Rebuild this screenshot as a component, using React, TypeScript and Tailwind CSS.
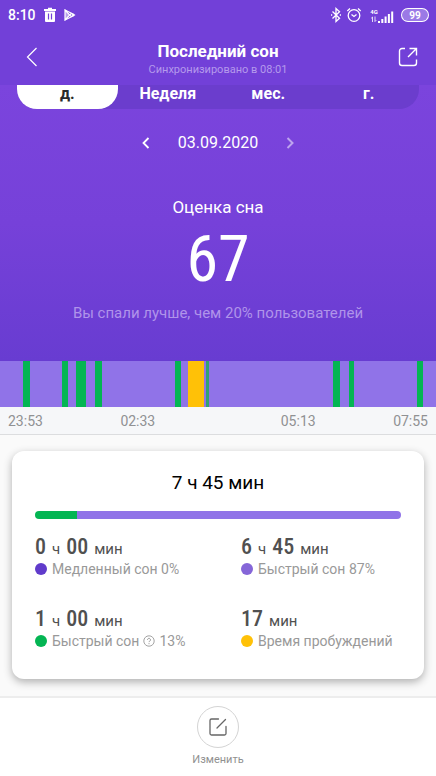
import type { ReactNode } from 'react';

type Stage = 'light' | 'rem' | 'brief' | 'awake';

const stageColors: Record<Stage, string> = {
  light: 'bg-[#9073e8]',
  rem: 'bg-[#04b553]',
  brief: 'bg-[#33a273]',
  awake: 'bg-[#ffc107]'
};

// Sleep stages in order, with their relative length
const timeline: { stage: Stage; length: number }[] = [
  { stage: 'light', length: 23 },
  { stage: 'rem', length: 7 },
  { stage: 'light', length: 32 },
  { stage: 'rem', length: 6 },
  { stage: 'light', length: 8 },
  { stage: 'rem', length: 10 },
  { stage: 'light', length: 9 },
  { stage: 'rem', length: 7 },
  { stage: 'light', length: 73 },
  { stage: 'rem', length: 6 },
  { stage: 'light', length: 7 },
  { stage: 'awake', length: 16 },
  { stage: 'light', length: 2 },
  { stage: 'brief', length: 3 },
  { stage: 'light', length: 124 },
  { stage: 'rem', length: 7 },
  { stage: 'light', length: 9 },
  { stage: 'rem', length: 5 },
  { stage: 'light', length: 63 },
  { stage: 'rem', length: 6 },
  { stage: 'light', length: 13 }
];

const tabs = ['д.', 'Неделя', 'мес.', 'г.'];

function StatusBar() {
  return (
    <div className="flex h-8 items-center justify-between px-2 pb-0.5 text-white">
      <div className="flex items-center gap-2">
        <span className="text-sm font-medium">8:10</span>
        <svg className="h-4 w-3" viewBox="0 0 12 16" fill="none">
          <path d="M0 3h12M4 1.7h4" stroke="currentColor" strokeWidth="2" />
          <path d="M1 4.5h10V14a1 1 0 0 1-1 1H2a1 1 0 0 1-1-1z" fill="currentColor" />
          <path d="M4.5 6.5v6M7.5 6.5v6" stroke="#7240d8" strokeWidth="1.2" />
        </svg>
        <svg className="h-3 w-3" viewBox="0 0 12 12" fill="none" stroke="currentColor" strokeWidth="1.2">
          <path d="M1 1v10l4.800-5z" fill="currentColor" fillOpacity=".5" />
          <path d="M1 1l8 4M1 11l8-4M5.800 6l2.200-2M5.800 6 8 8" />
          <path d="M9 4.300 11.500 6 9 7.700 7.500 6z" fill="currentColor" stroke="none" />
        </svg>
      </div>
      <div className="flex items-center gap-1">
        <svg className="h-4 w-3" viewBox="0 0 12 16" fill="none" stroke="currentColor" strokeWidth="1.3">
          <path d="m2.500 4.500 7 6.800L6 14.500v-13l3.500 3.200-7 6.800" />
          <path d="M1 8h1.200M9.800 8H11" />
        </svg>
        <svg className="h-4 w-4" viewBox="0 0 16 16" fill="none" stroke="currentColor" strokeWidth="1.3">
          <circle cx="8" cy="8.500" r="5.800" />
          <path d="M1.300 4 4 1.600M14.700 4 12 1.600M5.500 7.500 8 9.500l2.500-2" />
        </svg>
        <div className="ml-1 flex items-end">
          <div className="flex flex-col items-center">
            <span className="text-[6px] leading-[7px] font-bold">4G</span>
            <svg className="h-2 w-2" viewBox="0 0 8 8" fill="none" stroke="currentColor" strokeWidth=".8">
              <path d="M2.500 7V2L1.200 3.300M5 1.500v5l1.300-1.300" />
            </svg>
          </div>
          <svg className="h-3 w-4" viewBox="0 0 16 12" fill="currentColor">
            <path d="M0 10h2v2H0zM3.300 8h2v4h-2zM6.600 5.500h2V12h-2zM9.900 3h2v9h-2zM13.200.5h2V12h-2z" />
          </svg>
        </div>
        <span className="ml-1 flex h-3 w-[26px] items-center justify-center rounded-full bg-[#9b79e6] text-[10px] font-bold ring-1 ring-white">
          99
        </span>
      </div>
    </div>
  );
}

function Header() {
  return (
    <header className="bg-[#7240d8] text-white">
      <StatusBar />
      <div className="flex h-[53px] items-center justify-between px-[18px] pb-1">
        <button type="button" aria-label="Назад" className="flex w-7 justify-center">
          <svg className="h-5 w-3" viewBox="0 0 12 20" fill="none" stroke="currentColor" strokeWidth="1.2">
            <path d="M10.500 1 1.500 10l9 9" />
          </svg>
        </button>
        <div className="pt-1.5 text-center">
          <h1 className="text-[17px] leading-5 font-bold">Последний сон</h1>
          <p className="text-[11px] leading-[18px] text-[#b59aec]">Синхронизировано в 08:01</p>
        </div>
        <button type="button" aria-label="Поделиться" className="flex w-7 justify-end">
          <svg className="h-5 w-5" viewBox="0 0 20 20" fill="none" stroke="currentColor" strokeWidth="1.400">
            <path d="M7 1.500H4A2.500 2.500 0 0 0 1.500 4v12A2.500 2.500 0 0 0 4 18.500h12a2.500 2.500 0 0 0 2.500-2.500V12.500" />
            <path d="M11.500 1.500h7v7M18.500 1.500l-8.500 8.500" />
          </svg>
        </button>
      </div>
    </header>
  );
}

function PeriodTabs() {
  return (
    <div className="mx-[17px] grid h-6 grid-cols-4 rounded-b-[20px] bg-[#6b3dcd]" role="tablist">
      {tabs.map((tab, i) => (
        <button
          key={tab}
          type="button"
          role="tab"
          aria-selected={i === 0}
          className={
            i === 0
              ? 'rounded-b-[20px] bg-white pb-1.5 text-base leading-4 font-bold text-[#2a2a2a]'
              : 'pb-1.5 text-base leading-4 font-bold text-white'
          }
        >
          {tab}
        </button>
      ))}
    </div>
  );
}

function Score() {
  return (
    <section className="bg-linear-to-b from-[#7b44dd] via-[#7641d9] to-[#683cd1] pb-[38px] text-center text-white">
      <PeriodTabs />
      <div className="flex items-center justify-center gap-6 pt-[22px]">
        <button type="button" aria-label="Предыдущий день" className="flex w-4 justify-center">
          <svg className="h-3 w-2" viewBox="0 0 8 12" fill="none" stroke="currentColor" strokeWidth="1.800">
            <path d="M6.500 1 1.500 6l5 5" />
          </svg>
        </button>
        <span className="text-base leading-6">03.09.2020</span>
        <button type="button" aria-label="Следующий день" className="flex w-4 justify-center text-[#bda4ee]">
          <svg className="h-3 w-2" viewBox="0 0 8 12" fill="none" stroke="currentColor" strokeWidth="2">
            <path d="m1.500 1 5 5-5 5" />
          </svg>
        </button>
      </div>
      <h2 className="mt-10 text-[17px] leading-6">Оценка сна</h2>
      <p className="mt-2 font-['Roboto_Condensed','Liberation_Sans_Narrow',Roboto,sans-serif] text-[64px] leading-[66px] font-normal">
        67
      </p>
      <p className="mt-2.5 text-[15px] leading-5 text-[#b094ea]">Вы спали лучше, чем 20% пользователей</p>
    </section>
  );
}

function Timeline() {
  return (
    <section>
      <div className="flex h-[46px]">
        {timeline.map((part, i) => (
          <div key={i} className={stageColors[part.stage]} style={{ flex: `${part.length} 0 0` }} />
        ))}
      </div>
      <div className="flex h-7 items-center justify-between border-b border-[#dcdddf] bg-[#f6f7f9] px-2 text-sm text-[#909193]">
        <span>23:53</span>
        <span>02:33</span>
        <span className="ml-12">05:13</span>
        <span>07:55</span>
      </div>
    </section>
  );
}

interface StatProps {
  hours?: string;
  minutes: string;
  dot: string;
  children: ReactNode;
}

function StatNumber({ children }: { children: ReactNode }) {
  return (
    <span className="font-['Roboto_Condensed',Roboto,sans-serif] text-[22px] leading-6 font-medium">
      {children}
    </span>
  );
}

function Stat({ hours, minutes, dot, children }: StatProps) {
  return (
    <div>
      <p className="flex items-baseline gap-1.5 text-[15px] leading-4 text-[#505050]">
        {hours && (
          <>
            <StatNumber>{hours}</StatNumber>
            <span>ч</span>
          </>
        )}
        <StatNumber>{minutes}</StatNumber>
        <span>мин</span>
      </p>
      <p className="flex items-center gap-1 text-sm leading-5 whitespace-nowrap text-[#999999]">
        <span className={`mr-px h-3 w-3 rounded-full ${dot}`} />
        {children}
      </p>
    </div>
  );
}

function SummaryCard() {
  return (
    <section className="mx-3 my-4 rounded-xl bg-white px-[23px] pt-5 pb-7 shadow-[0_3px_8px_rgba(0,0,0,0.3)]">
      <h2 className="text-center text-[19px] leading-6 text-black">7 ч 45 мин</h2>
      <div className="mt-4 flex h-2 overflow-hidden rounded-full">
        <div className="bg-[#04b553]" style={{ width: '11.4%' }} />
        <div className="flex-1 bg-[#9073e8]" />
      </div>
      <div className="mt-4 grid grid-cols-[206fr_160fr] gap-y-7">
        <Stat hours="0" minutes="00" dot="bg-[#603bcb]">
          Медленный сон 0%
        </Stat>
        <Stat hours="6" minutes="45" dot="bg-[#8566d8]">
          Быстрый сон 87%
        </Stat>
        <Stat hours="1" minutes="00" dot="bg-[#04b553]">
          Быстрый сон
          <button type="button" aria-label="Что это?">
            <svg className="h-3 w-3" viewBox="0 0 12 12" fill="none" stroke="currentColor">
              <circle cx="6" cy="6" r="5.200" strokeWidth=".9" />
              <path d="M4.500 4.800a1.500 1.500 0 1 1 2.300 1.300c-.6.3-.8.5-.8 1M6 8.200v1" />
            </svg>
          </button>
          13%
        </Stat>
        <Stat minutes="17" dot="bg-[#ffc107]">
          Время пробуждений
        </Stat>
      </div>
    </section>
  );
}

export default function App() {
  return (
    <div className="flex min-h-screen flex-col bg-[#fafafa] font-[Roboto,'Noto_Sans',sans-serif]">
      <Header />
      <main>
        <Score />
        <Timeline />
        <SummaryCard />
      </main>
      <footer className="mt-auto flex justify-center border-t-2 border-[#ededed] bg-white pt-2 pb-2">
        <button type="button" className="flex flex-col items-center gap-1 text-[11px] leading-4 text-[#909090]">
          <span className="flex h-[42px] w-[42px] items-center justify-center rounded-full border border-[#d4d4d4]">
            <svg
              className="h-5 w-5"
              viewBox="0 0 20 20"
              fill="none"
              stroke="#666666"
              strokeWidth="1.300"
              strokeLinecap="round"
            >
              <path d="M10.500 2H3.500A1.500 1.500 0 0 0 2 3.500v13A1.500 1.500 0 0 0 3.500 18h13a1.500 1.500 0 0 0 1.500-1.500V9.500M17.500 2.500l-8.500 8.500" />
            </svg>
          </span>
          Изменить
        </button>
      </footer>
    </div>
  );
}
